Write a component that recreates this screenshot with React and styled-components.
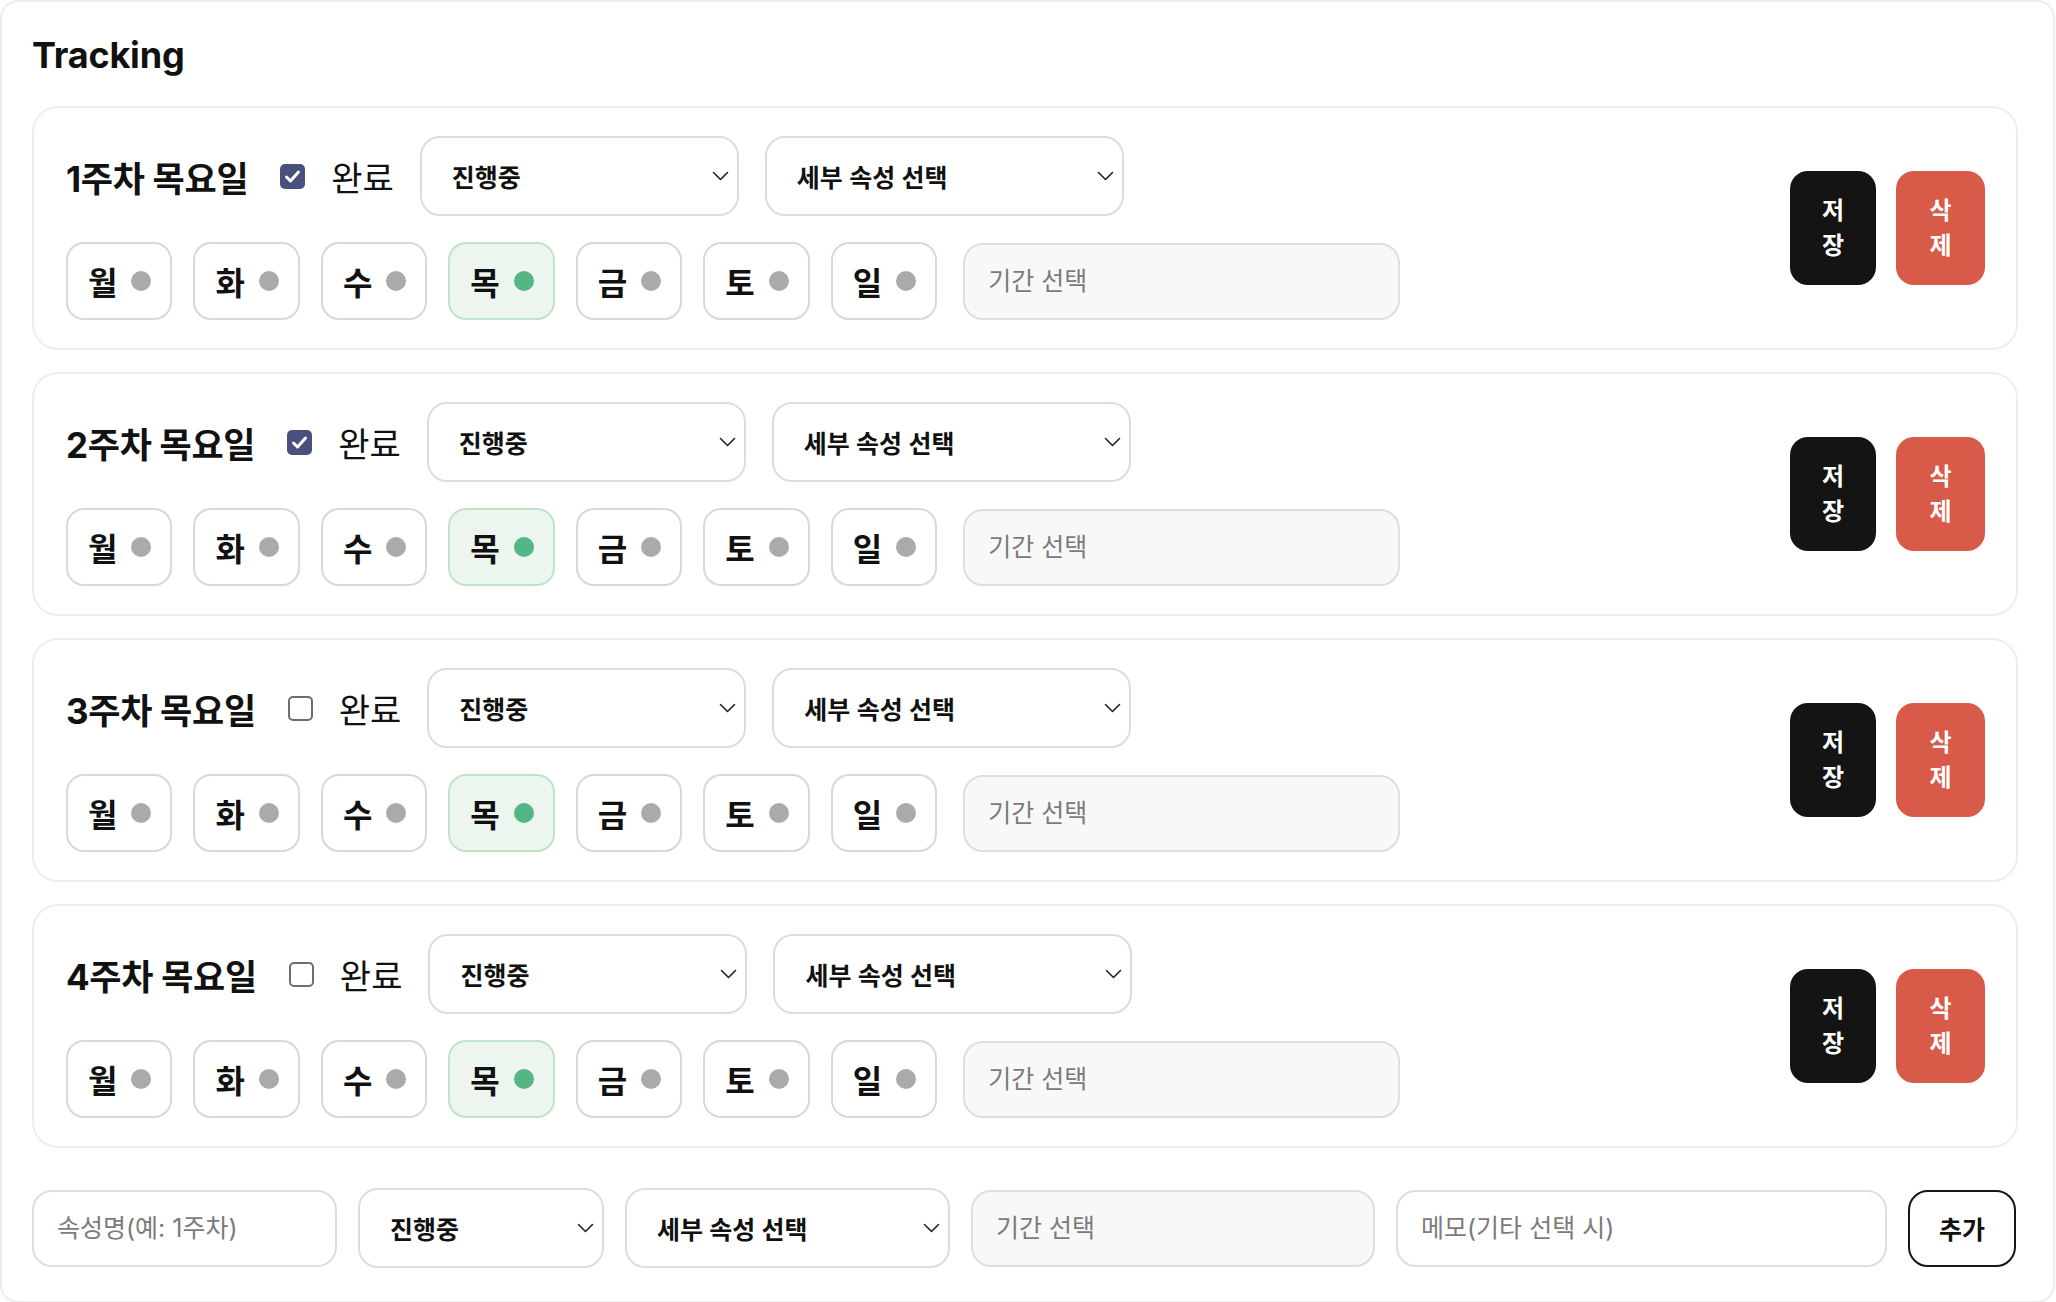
import React from 'react';
import styled, { createGlobalStyle } from 'styled-components';

const GlobalStyle = createGlobalStyle`
  html, body {
    margin: 0;
    padding: 0;
    background: #ffffff;
  }
  body {
    font-family: Inter, "Noto Sans CJK KR", sans-serif;
    color: #111111;
  }
  * {
    box-sizing: border-box;
  }
`;

const DAYS = ['월', '화', '수', '목', '금', '토', '일'];

const weeks = [
  { id: 1, label: '1주차 목요일', done: true, activeDay: '목' },
  { id: 2, label: '2주차 목요일', done: true, activeDay: '목' },
  { id: 3, label: '3주차 목요일', done: false, activeDay: '목' },
  { id: 4, label: '4주차 목요일', done: false, activeDay: '목' },
];

const Chevron = () => (
  <svg width="17" height="10" viewBox="0 0 17 10" fill="none">
    <path d="M1.5 1.5 L8.5 8.5 L15.5 1.5" stroke="#222" strokeWidth="1.6" strokeLinecap="round" strokeLinejoin="round" />
  </svg>
);

const Select = ({ value, width }) => (
  <SelectBox $width={width}>
    <span>{value}</span>
    <Chevron />
  </SelectBox>
);

const CheckMark = ({ checked }) => (
  <CheckBox $checked={checked}>
    {checked && (
      <svg width="25" height="25" viewBox="0 0 25 25" fill="none">
        <path d="M6.5 13 L10.5 17 L18.5 8" stroke="#fff" strokeWidth="3" strokeLinecap="round" strokeLinejoin="round" />
      </svg>
    )}
  </CheckBox>
);

const WeekCard = ({ week }) => (
  <Card>
    <CardMain>
      <TopRow>
        <WeekTitle>{week.label}</WeekTitle>
        <CheckMark checked={week.done} />
        <DoneLabel>완료</DoneLabel>
        <Select value="진행중" width={319} />
        <Select value="세부 속성 선택" width={359} />
      </TopRow>
      <DayRow>
        {DAYS.map(day => (
          <DayChip key={day} $active={day === week.activeDay}>
            {day}
            <Dot $active={day === week.activeDay} />
          </DayChip>
        ))}
        <Field $width={437} $muted $offset={5} placeholder="기간 선택" readOnly />
      </DayRow>
    </CardMain>
    <Actions>
      <ActionButton $bg="#141414" $width={86}>저장</ActionButton>
      <ActionButton $bg="#d85b4a" $width={89}>삭제</ActionButton>
    </Actions>
  </Card>
);

export default function App() {
  return (
    <>
      <GlobalStyle />
      <Panel>
        <Title>Tracking</Title>
        <CardList>
          {weeks.map(w => (
            <WeekCard key={w.id} week={w} />
          ))}
        </CardList>
        <AddRow>
          <Field $width={305} placeholder="속성명(예: 1주차)" readOnly />
          <Select value="진행중" width={246} />
          <Select value="세부 속성 선택" width={325} />
          <Field $width={404} $muted placeholder="기간 선택" readOnly />
          <Field $width={491} placeholder="메모(기타 선택 시)" readOnly />
          <AddButton>추가</AddButton>
        </AddRow>
      </Panel>
    </>
  );
}

const Panel = styled.div`
  width: 2055px;
  border: 2px solid #ededed;
  border-radius: 18px;
  padding: 31px 35px 33px 30px;
  background: #fff;
`;

const Title = styled.h2`
  margin: 0 0 29px;
  font-size: 36px;
  line-height: 44px;
  font-weight: 700;
  color: #111;
  letter-spacing: -0.2px;
`;

const CardList = styled.div`
  display: flex;
  flex-direction: column;
  gap: 22px;
`;

const Card = styled.div`
  display: flex;
  align-items: center;
  justify-content: space-between;
  border: 2px solid #eeeeee;
  border-radius: 26px;
  padding: 28px 31px 28px 32px;
  background: #fff;
`;

const CardMain = styled.div`
  display: flex;
  flex-direction: column;
  gap: 26px;
`;

const TopRow = styled.div`
  display: flex;
  align-items: center;
  gap: 26px;
`;

const WeekTitle = styled.div`
  font-size: 35px;
  font-weight: 700;
  color: #111;
  margin-right: 6px;
  white-space: nowrap;
  letter-spacing: -0.3px;
`;

const CheckBox = styled.span`
  width: 25px;
  height: 25px;
  border-radius: 5px;
  display: inline-flex;
  align-items: center;
  justify-content: center;
  background: ${p => (p.$checked ? '#4b4f7d' : '#fff')};
  border: ${p => (p.$checked ? 'none' : '2px solid #6e6e6e')};
`;

const DoneLabel = styled.span`
  font-size: 34px;
  font-weight: 400;
  color: #111;
`;

const SelectBox = styled.div`
  width: ${p => p.$width}px;
  height: 80px;
  display: flex;
  align-items: center;
  justify-content: space-between;
  padding: 0 8px 0 30px;
  border: 2px solid #dddddd;
  border-radius: 20px;
  background: #fff;
  font-size: 25px;
  font-weight: 600;
  color: #111;
  flex-shrink: 0;
`;

const DayRow = styled.div`
  display: flex;
  align-items: center;
  gap: 21px;
`;

const DayChip = styled.div`
  height: 78px;
  display: flex;
  align-items: center;
  gap: 14px;
  padding: 0 19px 0 20px;
  border: 2px solid ${p => (p.$active ? '#c0e3ca' : '#d6d8dd')};
  border-radius: 18px;
  background: ${p => (p.$active ? '#ecf6ef' : '#fff')};
  font-size: 32px;
  font-weight: 700;
  color: #111;
`;

const Dot = styled.span`
  width: 20px;
  height: 20px;
  border-radius: 50%;
  background: ${p => (p.$active ? '#55b685' : '#aaaaaa')};
`;

const Field = styled.input`
  width: ${p => p.$width}px;
  height: 77px;
  margin-left: ${p => p.$offset || 0}px;
  padding: 0 0 0 23px;
  border: 2px solid #dedede;
  border-radius: 20px;
  background: ${p => (p.$muted ? '#f8f8f8' : '#fff')};
  font-family: Inter, "Noto Sans CJK KR", sans-serif;
  font-size: 25px;
  color: #111;
  outline: none;
  flex-shrink: 0;

  &::placeholder {
    color: #7b7b7b;
  }
`;

const Actions = styled.div`
  display: flex;
  align-items: center;
  gap: 20px;
`;

const ActionButton = styled.button`
  width: ${p => p.$width}px;
  height: 114px;
  padding: 0 26px;
  border: none;
  border-radius: 18px;
  background: ${p => p.$bg};
  color: #fff;
  font-family: Inter, "Noto Sans CJK KR", sans-serif;
  font-size: 24px;
  line-height: 35px;
  font-weight: 700;
  text-align: center;
`;

const AddRow = styled.div`
  display: flex;
  align-items: center;
  gap: 21px;
  margin-top: 40px;
`;

const AddButton = styled.button`
  width: 108px;
  height: 77px;
  border: 2px solid #161616;
  border-radius: 20px;
  background: #fff;
  color: #111;
  font-family: Inter, "Noto Sans CJK KR", sans-serif;
  font-size: 25px;
  font-weight: 700;
  flex-shrink: 0;
`;
